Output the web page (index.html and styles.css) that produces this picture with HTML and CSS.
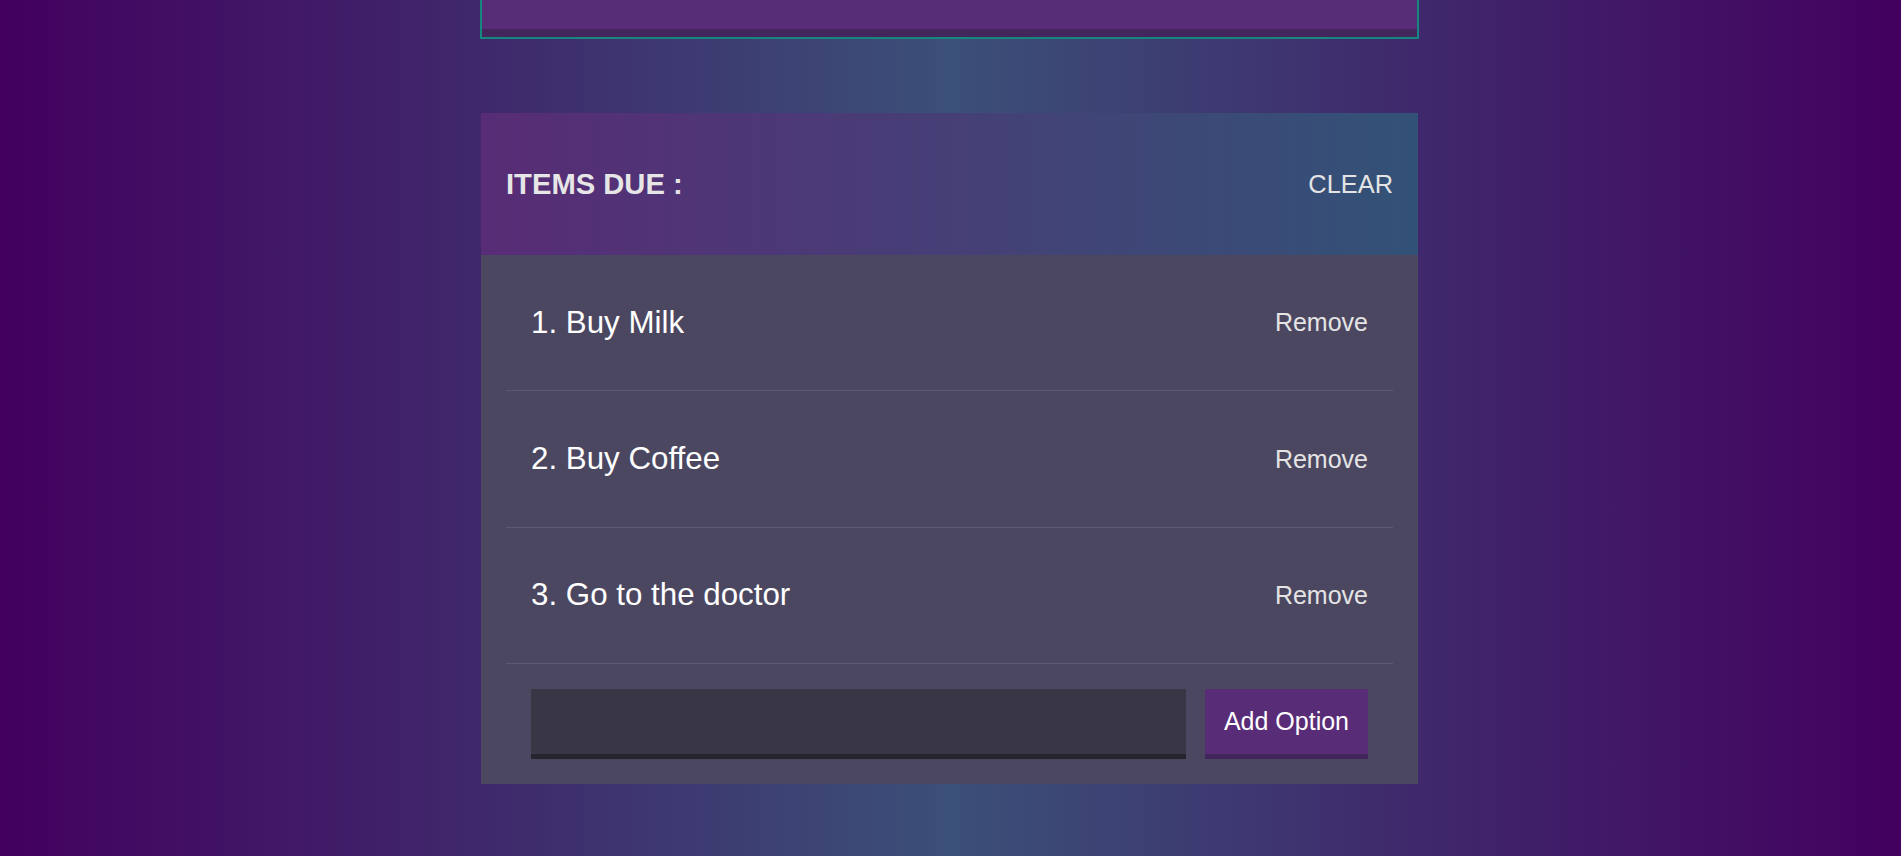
FILE: index.html
```html
<!DOCTYPE html>
<html lang="en">
<head>
<meta charset="utf-8">
<title>Indecision</title>
<link rel="stylesheet" href="styles.css">
</head>
<body>
  <div class="page">
    <div class="big-button" aria-hidden="true"></div>
    <section class="widget">
      <header class="widget-header">
        <h3 class="widget-title">ITEMS DUE :</h3>
        <button class="link-button clear">CLEAR</button>
      </header>
      <ul class="options">
        <li class="option">
          <span class="option-text">1. Buy Milk</span>
          <button class="link-button remove">Remove</button>
        </li>
        <li class="option">
          <span class="option-text">2. Buy Coffee</span>
          <button class="link-button remove">Remove</button>
        </li>
        <li class="option">
          <span class="option-text">3. Go to the doctor</span>
          <button class="link-button remove">Remove</button>
        </li>
      </ul>
      <form class="add-option">
        <input class="add-input" type="text" name="option">
        <button class="add-button" type="button">Add Option</button>
      </form>
    </section>
  </div>
</body>
</html>
```

FILE: styles.css
```css
html, body {
  margin: 0;
  padding: 0;
}

body {
  min-height: 100vh;
  padding-right: 2px;
  font-family: "Liberation Sans", Arial, sans-serif;
  background: linear-gradient(to right, #43005f 0%, #3b5078 50%, #43005f 100%);
  overflow: hidden;
}

.page {
  width: 937px;
  margin: 0 auto;
}

.big-button {
  height: 80px;
  margin-top: -51px;
  background: #582d78;
  border-bottom: 9px solid #42265c;
  outline: 2px solid #15877f;
  outline-offset: -1px;
}

.widget {
  margin-top: 75px;
  background: #4b4761;
}

.widget-header {
  height: 142px;
  box-sizing: border-box;
  padding: 0 25px;
  display: flex;
  align-items: center;
  justify-content: space-between;
  background: linear-gradient(to right, #582c76, #335277);
}

.widget-title {
  margin: 0;
  font-size: 29.2px;
  font-weight: bold;
  color: #e6e6e6;
}

.link-button {
  background: none;
  border: none;
  padding: 0;
  font-family: inherit;
  color: #e4e4e4;
  cursor: pointer;
}

.clear {
  font-size: 25.4px;
}

.options {
  list-style: none;
  margin: 0;
  padding: 0 25px;
}

.option {
  height: 136.4px;
  box-sizing: border-box;
  padding: 0 25px;
  display: flex;
  align-items: center;
  justify-content: space-between;
  border-bottom: 1px solid #5e5878;
}

.option-text {
  font-size: 31.3px;
  color: #ffffff;
}

.remove {
  font-size: 25px;
}

.add-option {
  display: flex;
  gap: 19px;
  padding: 25px 50px;
}

.add-input {
  flex: 1;
  height: 70px;
  box-sizing: border-box;
  margin: 0;
  padding: 0 12px;
  border: none;
  border-bottom: 5px solid #26242e;
  background: #393646;
  color: #ffffff;
  font-family: inherit;
  font-size: 25px;
}

.add-button {
  height: 70px;
  box-sizing: border-box;
  margin: 0;
  padding: 0 19px;
  border: none;
  border-bottom: 5px solid #42265b;
  background: #582c77;
  color: #ffffff;
  font-family: inherit;
  font-size: 25px;
}
```
